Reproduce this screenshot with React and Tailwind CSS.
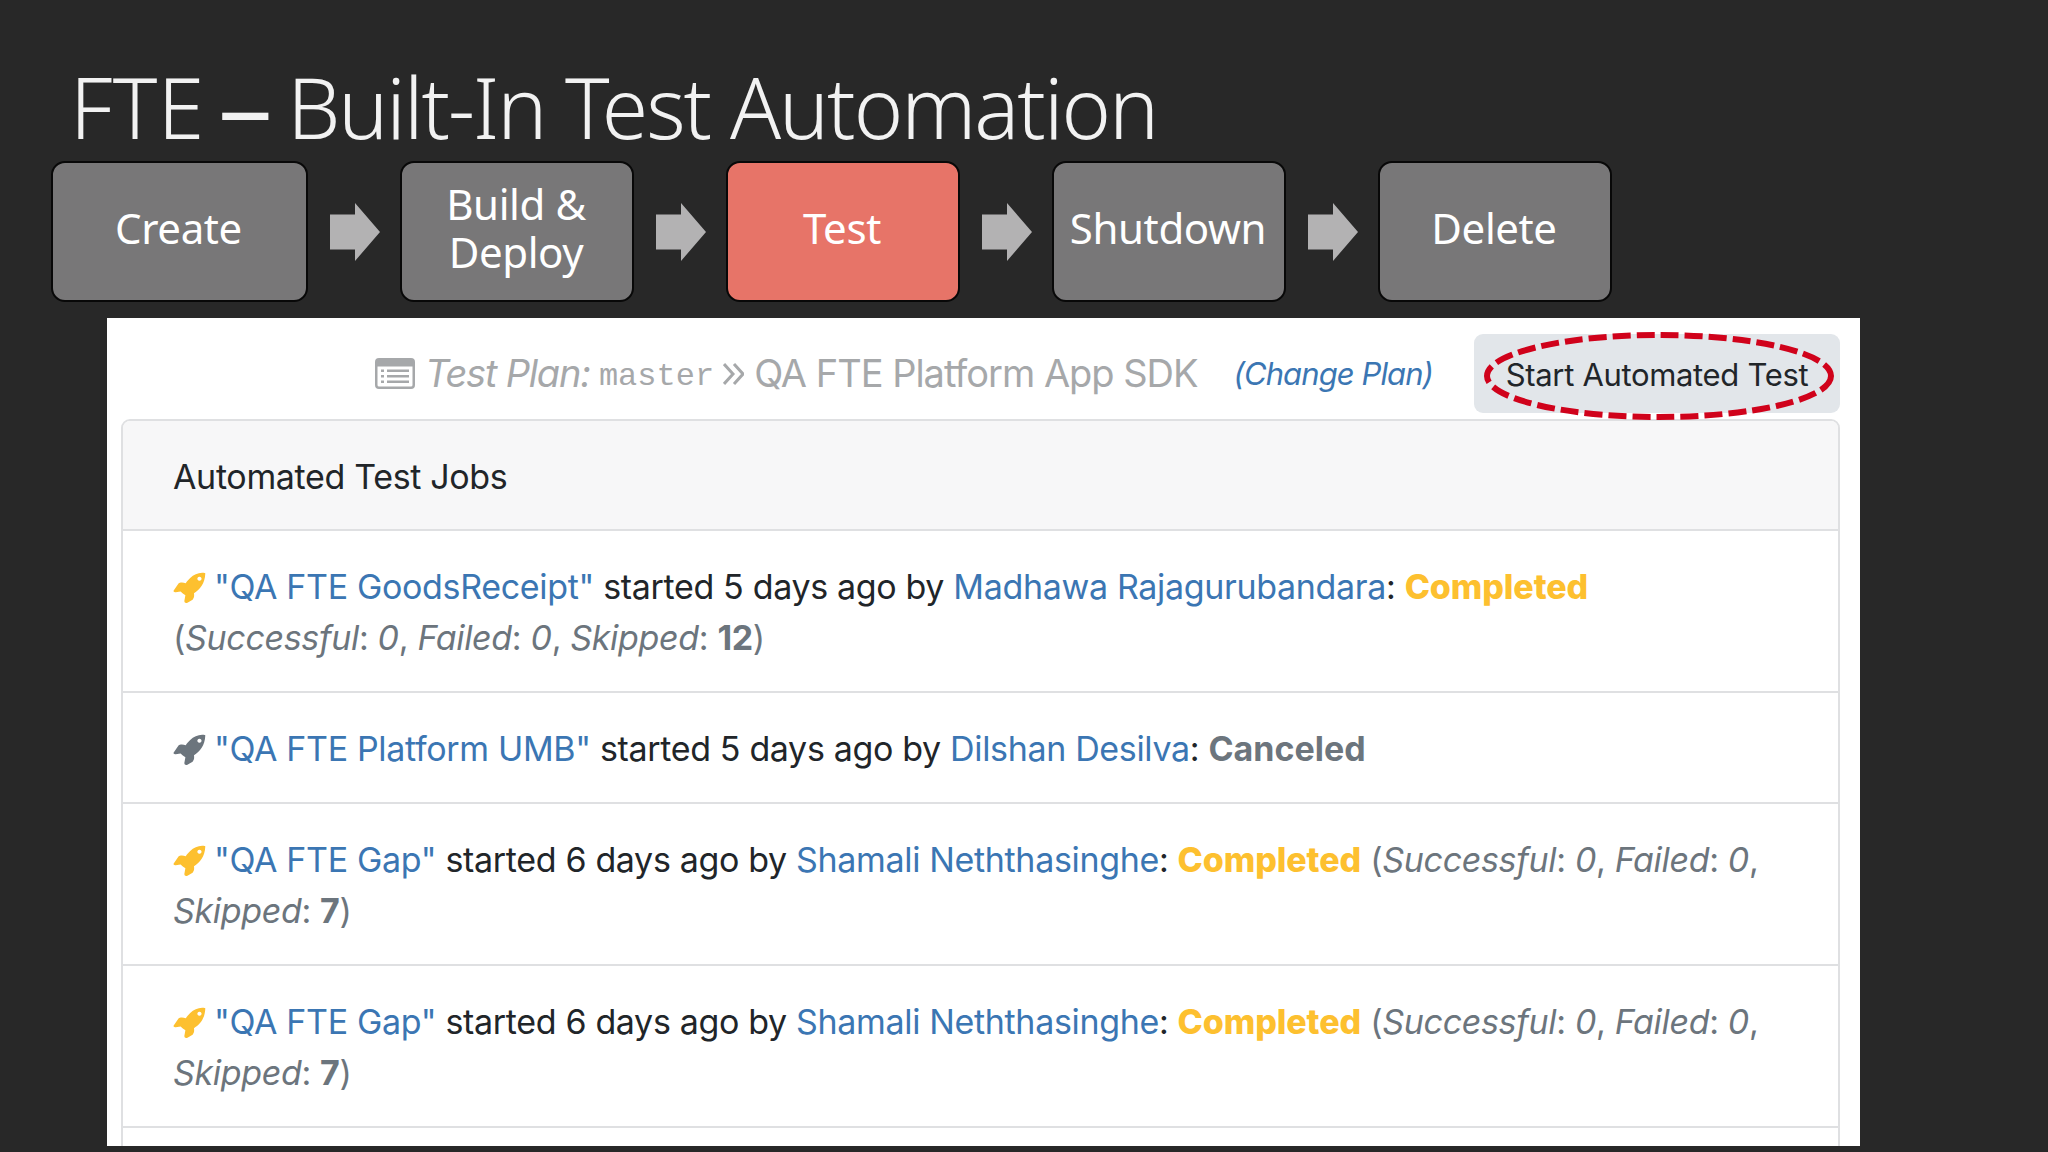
import { Fragment } from "react"

const steps = [
  { name: "Create", width: "w-[257px]" },
  { name: "Build & Deploy", width: "w-[234px]" },
  { name: "Test", width: "w-[234px]", active: true },
  { name: "Shutdown", width: "w-[234px]" },
  { name: "Delete", width: "w-[234px]" },
]

const jobs = [
  { id: 1, plan: "QA FTE GoodsReceipt", age: "5 days ago", user: "Madhawa Rajagurubandara", status: "Completed", skipped: 12 },
  { id: 2, plan: "QA FTE Platform UMB", age: "5 days ago", user: "Dilshan Desilva", status: "Canceled" },
  { id: 3, plan: "QA FTE Gap", age: "6 days ago", user: "Shamali Neththasinghe", status: "Completed", skipped: 7 },
  { id: 4, plan: "QA FTE Gap", age: "6 days ago", user: "Shamali Neththasinghe", status: "Completed", skipped: 7 },
]

function StepArrow() {
  return (
    <svg viewBox="0 0 50 58" className="mr-5 ml-[22px] h-[58px] w-[50px] shrink-0 fill-[#b3b2b3]">
      <path d="M0 11.500H25V0L50 29 25 58V46.500H0Z" />
    </svg>
  )
}

function PlanIcon() {
  return (
    <svg viewBox="0 0 40 31" className="h-[31px] w-10 fill-current">
      <path
        fillRule="evenodd"
        d="M4 0H36A4 4 0 0 1 40 4V27A4 4 0 0 1 36 31H4A4 4 0 0 1 0 27V4A4 4 0 0 1 4 0ZM2.500 8.500V27A1.500 1.500 0 0 0 4 28.500H36A1.500 1.500 0 0 0 37.500 27V8.500Z"
      />
      <path d="M6 11.500H9V14H6ZM6 17H9V19.500H6ZM6 22.500H9V25H6ZM12 11.500H34V14H12ZM12 17H34V19.500H12ZM12 22.500H34V25H12Z" />
    </svg>
  )
}

function RocketIcon({ className }) {
  return (
    <svg viewBox="0 0 96 92" className={`inline-block h-8 w-[33px] fill-current ${className}`}>
      <path
        fillRule="evenodd"
        d="M94 3C78 -1 62 6 50 17C44 23 40 28 37 32C29 29 20 29 16 33L2 53C0 57 4 59 8 58L22 56C26 60 31 64 36 67L33 84C33 89 37 91 42 89L57 80C62 75 62 68 61 61C78 50 93 34 94 3ZM77 13A6 6 0 1 1 76.900 13Z"
      />
    </svg>
  )
}

function JobRow({ job }) {
  const done = job.status === "Completed"
  return (
    <li className="border-t-2 border-[#dfe0e2] px-[50px] pt-[30px] pb-7">
      <RocketIcon className={`mr-2 align-[-5px] ${done ? "text-[#fdc02f]" : "text-[#6c757d]"}`} />
      <span className="text-[#3b76b3]">"{job.plan}"</span> started {job.age} by{" "}
      <span className="text-[#3b76b3]">{job.user}</span>:{" "}
      <b className={done ? "font-extrabold tracking-[-0.1px] text-[#fdc02f]" : "tracking-normal text-[#6c757d]"}>{job.status}</b>{" "}
      {done && (
        <span className="text-[#6c757d]">
          (<i>Successful</i>: <i>0</i>, <i>Failed</i>: <i>0</i>, <i>Skipped</i>: <b>{job.skipped}</b>)
        </span>
      )}
    </li>
  )
}

export default function App() {
  return (
    <div className="h-[1152px] w-[2048px] overflow-hidden bg-[#282828]">
      <h1 className="h-[161px] pt-[52px] pl-[70px] font-['Noto_Sans',sans-serif] text-[84px] leading-[110px] font-light tracking-[-2px] whitespace-nowrap text-[#f2f2f2]">
        <span className="tracking-[0.3px]">FTE</span>{" "}
        <span className="mr-[9px] -ml-1.5 inline-block origin-left scale-x-[1.3] font-medium">–</span> Built-In Test Automation
      </h1>

      <div className="flex items-center pl-[51px] font-['Noto_Sans',sans-serif] text-[42px] leading-[48px] tracking-[-0.4px] text-white">
        {steps.map((step, i) => (
          <Fragment key={step.name}>
            {i > 0 && <StepArrow />}
            <div
              className={`flex h-[141px] shrink-0 items-center justify-center rounded-[14px] border-2 border-[#080808] pr-0.5 pb-2 text-center ${step.width} ${
                step.active ? "bg-[#e77468]" : "bg-[#787778]"
              }`}
            >
              {step.name}
            </div>
          </Fragment>
        ))}
      </div>

      <main className="mt-4 ml-[107px] h-[828px] w-[1753px] overflow-hidden bg-white px-[14px] pt-4 font-[Inter,sans-serif] text-[34px] leading-[51px] tracking-[-0.34px] text-[#212529]">
        <div className="relative flex h-[79px] items-center justify-end pr-1.5 whitespace-nowrap text-[#a6a8aa]">
          <PlanIcon />
          <i className="ml-[10px] text-[38px] tracking-[-1.2px]">Test Plan:</i>
          <span className="ml-[9px] translate-y-[3px] font-['Liberation_Mono',monospace] text-[32px] tracking-normal">master</span>
          <svg viewBox="0 0 21 22" className="mr-[10px] ml-[9px] h-[22px] w-[21px] fill-none stroke-current stroke-[3]">
            <path d="M1 1L10 11 1 21M11 1L20 11 11 21" />
          </svg>
          <span className="text-[38px] tracking-[-1.02px]">QA FTE Platform App SDK</span>
          <i className="ml-9 text-[31px] tracking-[-0.9px] text-[#3b76b3]">(Change Plan)</i>
          <button className="ml-[41px] h-[79px] w-[366px] rounded-[9px] bg-[#e2e6ea] pt-0.5 text-[31px] tracking-[-0.33px] text-[#212529]">
            Start Automated Test
          </button>
          <svg viewBox="0 0 350 90" className="absolute top-[-3px] right-3 h-[90px] w-[350px] overflow-visible">
            <ellipse cx="175" cy="45" rx="172" ry="41" className="fill-none stroke-[#d0021b] stroke-[6] [stroke-dasharray:18_6]" />
          </svg>
        </div>

        <section className="mt-1.5 h-[760px] w-[1719px] rounded-t-[9px] border-2 border-[#dfe0e2]">
          <h2 className="h-[108px] rounded-t-[7px] bg-[#f7f7f8] px-[50px] pt-[30px]">Automated Test Jobs</h2>
          <ul>
            {jobs.map((job) => (
              <JobRow key={job.id} job={job} />
            ))}
            <li className="border-t-2 border-[#dfe0e2]" />
          </ul>
        </section>
      </main>
    </div>
  )
}
